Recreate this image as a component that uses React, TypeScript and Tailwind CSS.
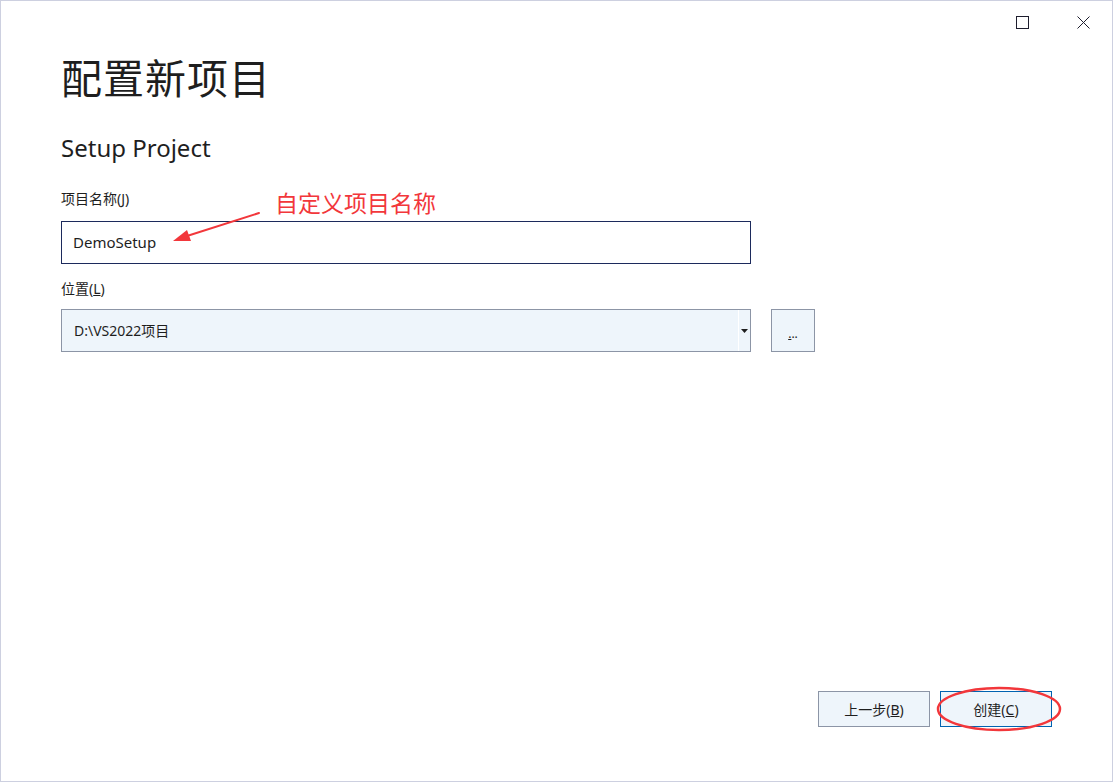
import React from "react";

const font = '"Noto Sans", "Noto Sans CJK SC", sans-serif';

export default function App() {
  return (
    <div
      className="relative w-[1113px] h-[782px] bg-white border border-[#cdd0e0] text-[#1e1e1e] overflow-hidden"
      style={{ fontFamily: font }}
    >
      {/* window controls */}
      <div className="flex justify-end items-center h-[42px] pr-[22px] gap-[48px]">
        <svg width="13" height="13" viewBox="0 0 13 13">
          <rect x="0.5" y="0.5" width="12" height="12" fill="none" stroke="#1e1e2e" strokeWidth="1" />
        </svg>
        <svg width="13" height="13" viewBox="0 0 13 13">
          <path d="M0.5 0.5 L12.5 12.5 M12.5 0.5 L0.5 12.5" stroke="#1e1e2e" strokeWidth="1" />
        </svg>
      </div>

      <div className="pl-[60px]">
        <div className="text-[41px] leading-[48px] mt-[11px] tracking-[1px]">配置新项目</div>
        <div className="text-[24px] leading-[32px] mt-[30px]">Setup Project</div>

        <div className="text-[14px] leading-[20px] mt-[25px]">
          项目名称(<span className="underline">J</span>)
        </div>
        <div className="mt-[12px] w-[690px] h-[43px] border border-[#1c2a5c] flex items-center pl-[11px] text-[15px]">
          DemoSetup
        </div>

        <div className="text-[14px] leading-[20px] mt-[15px]">
          位置(<span className="underline">L</span>)
        </div>
        <div className="mt-[10px] flex gap-[20px]">
          <div className="w-[690px] h-[43px] border border-[#8c95a6] bg-[#eef5fb] flex items-center">
            <div className="flex-1 pl-[12px] text-[14px]">D:\VS2022项目</div>
            <div className="w-[12px] h-full border-l border-white flex items-center justify-center">
              <svg width="7" height="4" viewBox="0 0 7 4">
                <path d="M0 0 L7 0 L3.5 4 Z" fill="#1e1e1e" />
              </svg>
            </div>
          </div>
          <div className="w-[44px] h-[43px] border border-[#8c95a6] bg-[#eef5fb] flex items-center justify-center text-[12px] pt-[6px]">
            <span>
              <span className="underline">.</span>..
            </span>
          </div>
        </div>
      </div>

      {/* bottom buttons */}
      <div className="absolute left-[817px] top-[690px] flex gap-[10px]">
        <div className="w-[112px] h-[36px] border border-[#8c95a6] bg-[#eef5fb] flex items-center justify-center text-[14px]">
          上一步(<span className="underline">B</span>)
        </div>
        <div className="w-[112px] h-[36px] border border-[#0063b1] bg-[#eef5fb] flex items-center justify-center text-[14px]">
          创建(<span className="underline">C</span>)
        </div>
      </div>

      {/* annotation text */}
      <div className="absolute left-[274px] top-[187px] text-[23px] leading-[30px] text-[#f2373b]">
        自定义项目名称
      </div>

      {/* annotation arrow */}
      <svg className="absolute left-0 top-0" width="1113" height="782">
        <path d="M258 212 L186 235" stroke="#f2373b" strokeWidth="2" strokeLinecap="round" />
        <path d="M172 240 L186 229 L190 240 Z" fill="#f2373b" />
        <ellipse cx="998" cy="708" rx="61" ry="21" fill="none" stroke="#f2373b" strokeWidth="2.5" />
      </svg>
    </div>
  );
}
